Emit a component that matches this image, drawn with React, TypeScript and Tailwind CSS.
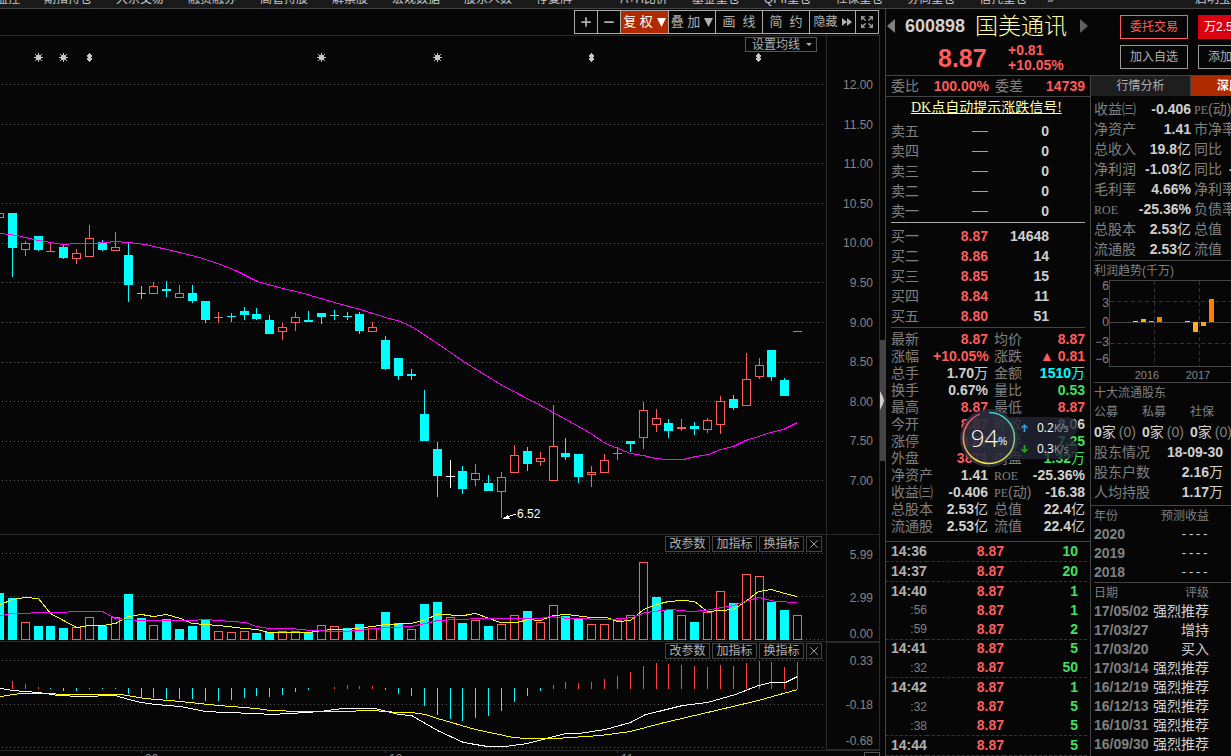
import { Fragment } from "react";
import { Expand, Minus, Plus, X } from "lucide-react";

type Tone = "r" | "c" | "w";
// [tone, high, body top, body bottom, low]
type Candle = [Tone, number, number, number, number];

const RED = "#ff5c5c";
const CYAN = "#00ffff";
const TONES: Record<Tone, string> = { r: RED, c: CYAN, w: "#ffffff" };

// first candle is cut by the left edge
const candles: Candle[] = [
  ["r", 213, 213, 218, 218], ["c", 213, 213, 248, 277], ["r", 241, 243, 250, 256],
  ["c", 236, 236, 250, 251], ["r", 243, 251, 252, 252], ["c", 245, 247, 258, 259],
  ["r", 249, 253, 259, 264], ["r", 225, 238, 257, 257], ["c", 240, 242, 250, 251],
  ["r", 232, 247, 251, 251], ["c", 243, 255, 285, 302], ["c", 286, 293, 294, 299],
  ["r", 282, 286, 294, 294], ["c", 281, 289, 291, 297], ["r", 285, 293, 298, 298],
  ["c", 285, 293, 301, 303], ["c", 301, 301, 320, 323], ["r", 312, 317, 318, 323],
  ["c", 313, 316, 317, 322], ["c", 307, 311, 315, 320], ["c", 308, 314, 319, 320],
  ["c", 315, 320, 334, 334], ["r", 323, 327, 332, 340], ["r", 312, 317, 323, 331],
  ["c", 311, 320, 322, 322], ["c", 313, 313, 317, 324], ["c", 310, 315, 316, 320],
  ["c", 312, 316, 317, 320], ["c", 312, 314, 331, 334], ["r", 322, 327, 332, 332],
  ["c", 336, 340, 369, 370], ["c", 358, 358, 376, 380], ["c", 369, 374, 376, 380],
  ["c", 390, 414, 441, 441], ["c", 442, 449, 476, 497], ["w", 460, 476, 477, 488],
  ["c", 466, 471, 489, 494], ["r", 464, 473, 480, 486], ["c", 475, 483, 491, 491],
  ["r", 472, 477, 492, 518], ["r", 445, 455, 473, 473], ["c", 447, 451, 464, 471],
  ["r", 452, 458, 462, 466], ["r", 405, 446, 481, 481], ["c", 438, 453, 457, 460],
  ["c", 454, 454, 477, 483], ["r", 466, 472, 475, 487], ["r", 454, 460, 473, 473],
  ["r", 447, 453, 454, 460], ["c", 441, 441, 444, 452], ["r", 402, 410, 438, 449],
  ["r", 409, 418, 425, 432], ["c", 419, 423, 431, 438], ["r", 419, 427, 429, 431],
  ["c", 422, 426, 429, 435], ["r", 418, 420, 430, 433], ["r", 396, 401, 425, 434],
  ["c", 395, 399, 408, 410], ["r", 353, 379, 406, 406], ["r", 358, 365, 377, 379],
  ["c", 350, 350, 377, 381], ["c", 378, 380, 396, 396], ["r", 331, 331, 332, 332],
];

const volumes =
  "c593 c598 r622 c626 c626 c628 r627 r617 c626 r617 c594 c618 r625 c619 c629 c626 c620 r631 r632 r631 c633 c632 r631 r631 c632 r625 r626 c628 c624 r628 c612 c623 r629 c604 c602 r617 c623 r620 c626 r624 r615 c611 r622 r605 c616 c619 r624 r624 r620 r615 r562 c597 c610 r615 c622 r612 r591 c603 r574 r576 c602 c610 r615"
    .split(" ")
    .map((s) => ({ tone: s[0] as Tone, top: Number(s.slice(1)) }));

// ends of the MACD sticks, zero line is 688
const macd = [
  681, 684, 687, 689, 691, 691, 689, 689, 689, 694, 698, 698, 699, 699, 699, 701, 701, 700, 698, 696, 697,
  695, 692, 690, 688, 687, 685, 686, 686, 690, 694, 696, 706, 715, 719, 721, 718, 716, 711, 702, 696, 691,
  685, 682, 683, 682, 679, 676, 672, 666, 663, 664, 665, 666, 667, 665, 666, 663, 661, 662, 667, 662,
];

const ma =
  "0,233 16,235 38,240 63,244 75,243 95,243 115,241 128,242 145,244 192,255 205,259 220,264 235,270 257,281 282,288 300,292 334,302 360,309 385,317 400,321 411,326 437,343 463,361 500,384 540,405 580,427 592,434 605,443 630,453 643,455 655,458 668,459 683,459 695,456 708,454 720,449 733,446 745,440 758,436 770,432 783,429 797,422";
const volFast =
  "0,604 12,599 25,597 38,598 50,613 63,620 76,627 89,625 102,625 115,623 128,616 141,614 153,616 166,614 180,618 192,623 218,625 244,628 256,629 269,632 308,632 330,629 347,629 372,626 385,624 411,623 425,619 437,614 463,615 475,613 500,622 517,622 527,619 540,620 553,615 567,614 590,617 606,617 617,621 630,620 643,609 656,604 668,601 682,600 694,601 707,611 733,609 745,601 758,591 771,589 784,593 797,596";
const volSlow =
  "0,615 12,613 50,612 85,611 102,611 115,618 140,620 190,620 205,619 218,620 245,622 256,626 269,628 290,628 310,630 340,631 360,630 372,628 411,626 425,623 437,620 480,618 540,618 550,616 568,618 610,619 632,617 645,612 670,609 690,611 705,610 733,605 748,600 758,597 775,601 797,602";
const dif =
  "0,688 12,690 38,692 58,695 80,696 115,695 128,699 141,702 155,704 180,706 205,711 225,712 256,713 270,714 290,713 320,711 342,708 375,708 398,714 411,715 437,730 463,742 487,746 505,746 527,743 565,733 578,733 605,729 630,722 645,714 658,711 682,705 707,702 735,694 758,685 771,682 785,682 797,676";
const dea =
  "0,696 20,693 50,693 60,694 120,694 145,698 180,701 218,705 256,708 270,710 300,711 340,711 372,710 398,712 411,712 425,714 437,718 475,729 513,737 525,738 555,738 600,735 630,731 660,723 758,700 797,689";

const navItems = [
  "监控", "期指持仓", "大宗交易", "融资融券", "高管持股", "解禁股", "宏观数据", "股东人数", "停复牌",
  "A+H比价", "基金重仓", "QFII重仓", "社保重仓", "券商重仓", "信托重仓",
];

const priceTicks = ["12.00", "11.50", "11.00", "10.50", "10.00", "9.50", "9.00", "8.50", "8.00", "7.50", "7.00"];

const sells = ["卖五", "卖四", "卖三", "卖二", "卖一"];
const buys = [
  ["买一", "8.87", "14648"],
  ["买二", "8.86", "14"],
  ["买三", "8.85", "15"],
  ["买四", "8.84", "11"],
  ["买五", "8.80", "51"],
];

const R = "text-[#ff5c5c]";
const W = "text-[#d0d0d0]";
const G = "text-[#40e060]";
const C = "text-[#00ffff]";

const stats = [
  ["最新", "8.87", R, "均价", "8.87", R],
  ["涨幅", "+10.05%", R, "涨跌", "▲ 0.81", R],
  ["总手", "1.70万", W, "金额", "1510万", C],
  ["换手", "0.67%", W, "量比", "0.53", G],
  ["最高", "8.87", R, "最低", "8.87", R],
  ["今开", "8.87", R, "昨收", "8.06", W],
  ["涨停", "8.87", R, "跌停", "7.25", G],
  ["外盘", "3871", R, "内盘", "1.32万", G],
  ["净资产", "1.41", W, "ROE", "-25.36%", W],
  ["收益㈢", "-0.406", W, "PE(动)", "-16.38", W],
  ["总股本", "2.53亿", W, "总值", "22.4亿", W],
  ["流通股", "2.53亿", W, "流值", "22.4亿", W],
];

// [time, volume, last row of its minute]
const trades: [string, string, boolean][] = [
  ["14:36", "10", true], ["14:37", "20", true], ["14:40", "1", false], [":56", "1", false],
  [":59", "2", true], ["14:41", "5", false], [":32", "50", true], ["14:42", "1", false],
  [":32", "5", false], [":38", "5", true], ["14:44", "5", true],
];

const finance = [
  ["收益㈢", "-0.406", "PE(动)", ""],
  ["净资产", "1.41", "市净率", ""],
  ["总收入", "19.8亿", "同比", ""],
  ["净利润", "-1.03亿", "同比", "-"],
  ["毛利率", "4.66%", "净利率", ""],
  ["ROE", "-25.36%", "负债率", ""],
  ["总股本", "2.53亿", "总值", ""],
  ["流通股", "2.53亿", "流值", ""],
];

const profitBars = [
  [1133, 321, 1, "#ffc266"], [1141, 319, 3, "#ffb020"], [1149, 321, 1, "#ffa31a"], [1157, 317, 5, "#ff8000"],
  [1185, 321, 1, "#ffc266"], [1193, 322, 10, "#ffb020"], [1201, 322, 4, "#ffa31a"], [1209, 299, 23, "#ff8000"],
] as const;

const ratings = [
  ["17/05/02", "强烈推荐"], ["17/03/27", "增持"], ["17/03/20", "买入"], ["17/03/14", "强烈推荐"],
  ["16/12/19", "强烈推荐"], ["16/12/13", "强烈推荐"], ["16/10/31", "强烈推荐"], ["16/09/30", "强烈推荐"],
];

const colX = (i: number) => Math.floor(12.3 + 12.875 * i);

// digits are bold, the unit behind them is not
function Num({ children }: { children: string }) {
  return (
    <span className="font-bold">
      {children.split(/([万亿家▲])/).map((part, i) =>
        /[万亿家▲]/.test(part) ? (
          <span key={i} className="font-normal">{part}</span>
        ) : (
          <Fragment key={i}>{part}</Fragment>
        )
      )}
    </span>
  );
}

// latin parts of a label are set in a small serif
function Label({ children }: { children: string }) {
  return (
    <>
      {children.split(/(ROE|PE)/).map((part, i) =>
        /ROE|PE/.test(part) ? (
          <span key={i} className="text-xs font-['Liberation_Serif',serif]">{part}</span>
        ) : (
          <Fragment key={i}>{part}</Fragment>
        )
      )}
    </>
  );
}

function Dots({ ys }: { ys: number[] }) {
  return (
    <>
      {ys.map((y) => (
        <line key={y} x1="2" x2="826" y1={y + 0.5} y2={y + 0.5} stroke="#585858" strokeDasharray="1 3" />
      ))}
    </>
  );
}

function Trend({ points, color }: { points: string; color: string }) {
  return <polyline points={points} fill="none" stroke={color} strokeWidth="1" transform="translate(0.5 0.5)" />;
}

function Plot({ top, height, children }: { top: number; height: number; children: React.ReactNode }) {
  return (
    <svg
      viewBox={`0 ${top} 826 ${height}`}
      preserveAspectRatio="none"
      shapeRendering="crispEdges"
      className="block w-full h-full"
    >
      {children}
    </svg>
  );
}

function Star({ x }: { x: number }) {
  return (
    <g stroke="#c8c8c8" fill="#c8c8c8">
      <rect x={x - 2} y="55" width="5" height="5" stroke="none" />
      <path d={`M${x + 0.5} 53v9M${x - 4} 57.5h9`} />
      <path d={`M${x - 3} 54h1v1h-1zM${x + 3} 54h1v1h-1zM${x - 3} 60h1v1h-1zM${x + 3} 60h1v1h-1z`} stroke="none" />
    </g>
  );
}

function Capsule({ x }: { x: number }) {
  return (
    <path
      fill="#c8c8c8"
      d={`M${x} 53h1v1h1v1h1v2h-1v1h1v2h-1v1h-1v1h-1v-1h-1v-1h-1v-2h1v-1h-1v-2h1v-1h1z`}
    />
  );
}

function PriceChart() {
  return (
    <Plot top={36} height={498}>
      <Dots ys={[84, 124, 163, 203, 243, 282, 322, 362, 401, 441, 480]} />
      {[38, 63, 321, 437].map((x) => <Star key={x} x={x} />)}
      {[89, 591, 758].map((x) => <Capsule key={x} x={x} />)}
      {candles.map(([tone, high, top, bottom, low], i) => {
        const x = colX(i - 1);
        const color = TONES[tone];
        const hollow = tone === "r" && bottom - top > 2;
        return (
          <g key={i} fill={color}>
            <rect x={x} y={high} width="1" height={top - high} />
            <rect x={x} y={bottom} width="1" height={low - bottom} />
            {hollow ? (
              <rect x={x - 3.5} y={top + 0.5} width="8" height={bottom - top - 1} fill="none" stroke={color} />
            ) : (
              <rect x={x - 4} y={top} width="9" height={bottom - top} />
            )}
          </g>
        );
      })}
      <Trend points={ma} color="#ff00ff" />
      <path d="M504 518L516 514" stroke="#fff" />
      <path d="M503 518.500L508 515v2l2 1v1z" fill="#fff" />
      <text x="517" y="518" fill="#fff" fontSize="12">6.52</text>
    </Plot>
  );
}

function VolumeChart() {
  return (
    <Plot top={535} height={106}>
      <Dots ys={[553, 596, 639]} />
      {volumes.map(({ tone, top }, i) => {
        const x = colX(i - 1);
        return tone === "r" ? (
          <rect key={i} x={x - 3.5} y={top + 0.5} width="8" height={639 - top} fill="#060606" stroke={RED} />
        ) : (
          <rect key={i} x={x - 4} y={top} width="9" height={640 - top} fill={CYAN} />
        );
      })}
      <Trend points={volFast} color="#ffff00" />
      <Trend points={volSlow} color="#ff00ff" />
    </Plot>
  );
}

function MacdChart() {
  return (
    <Plot top={642} height={108}>
      <Dots ys={[660, 704, 747]} />
      {macd.map((end, i) => (
        <rect
          key={i}
          x={colX(i)}
          y={Math.min(end, 688)}
          width="1"
          height={end < 688 ? 689 - end : end - 688}
          fill={end < 688 ? "#ff4040" : CYAN}
        />
      ))}
      <Trend points={dif} color="#ffffff" />
      <Trend points={dea} color="#ffff00" />
    </Plot>
  );
}

function IndicatorButtons() {
  return (
    <div className="absolute top-px right-1 flex gap-[2px] text-xs leading-[14px] text-[#b0b0b0]">
      {["改参数", "加指标", "换指标"].map((label) => (
        <button key={label} className="w-[45px] h-4 border border-[#444] bg-[#060606] whitespace-nowrap">
          {label}
        </button>
      ))}
      <button aria-label="关闭" className="w-4 h-4 border border-[#444] bg-[#060606] flex items-center justify-center">
        <X className="w-[14px] h-[14px] shrink-0" strokeWidth={1.5} />
      </button>
    </div>
  );
}

function ToolButton({ children, className = "w-[47px]" }: { children: React.ReactNode; className?: string }) {
  return (
    <button
      className={`h-[22px] flex items-center justify-center whitespace-nowrap border-r border-[#aaa] last:border-r-0 ${className}`}
    >
      {children}
    </button>
  );
}

function ChartArea() {
  return (
    <section className="flex-1 min-w-0 flex flex-col">
      <div className="h-[27px] border-b border-[#2a2a2a] flex justify-end items-center pr-px">
        <div className="flex border border-[#aaa] text-sm leading-5 text-[#b0b0b0]">
          <ToolButton className="w-[23px]"><Plus className="w-[14px] h-[14px]" strokeWidth={3} /></ToolButton>
          <ToolButton className="w-[23px]"><Minus className="w-[14px] h-[14px]" strokeWidth={3} /></ToolButton>
          <ToolButton className="w-[48px] bg-[#b02a00] text-white">
            <span className="text-[13px]">复&nbsp;权</span>
            <svg viewBox="0 0 9 9" className="w-[9px] h-[9px] ml-1" fill="currentColor"><path d="M0 0h9L4.500 9z" /></svg>
          </ToolButton>
          <ToolButton>
            <span className="text-[13px]">叠&nbsp;加</span>
            <svg viewBox="0 0 9 9" className="w-[9px] h-[9px] ml-1" fill="currentColor"><path d="M0 0h9L4.500 9z" /></svg>
          </ToolButton>
          <ToolButton><span className="text-[13px]">画&nbsp;&nbsp;线</span></ToolButton>
          <ToolButton><span className="text-[13px]">简&nbsp;&nbsp;约</span></ToolButton>
          <ToolButton className="w-[46px] text-xs">
            隐藏
            <svg viewBox="0 0 10 8" className="w-[10px] h-2 ml-1" fill="currentColor"><path d="M0 0l5 4-5 4zM5 0l5 4-5 4z" /></svg>
          </ToolButton>
          <ToolButton className="w-[22px]"><Expand className="w-[14px] h-[14px]" strokeWidth={2} /></ToolButton>
        </div>
      </div>

      <div className="flex-1 min-h-0 flex border-b border-[#2a2a2a]">
        <div className="relative flex-1 min-w-0">
          <PriceChart />
          <button className="absolute top-px right-[9px] h-[15px] w-[72px] border border-[#555] bg-[#060606] flex items-center justify-end gap-[6px] pr-1 text-xs leading-3 text-[#b0b0b0] whitespace-nowrap">
            设置均线
            <svg viewBox="0 0 6 3" className="w-[6px] h-[3px]" fill="currentColor"><path d="M0 0h6L3 3z" /></svg>
          </button>
        </div>
        <div className="w-[54px] border-x border-[#2a2a2a] pt-[41px] pb-[45px] pr-[6px] flex flex-col justify-between text-right text-xs leading-4 text-[#858585]">
          {priceTicks.map((t) => <span key={t}>{t}</span>)}
        </div>
      </div>

      <div className="h-[107px] flex border-b border-[#2a2a2a]">
        <div className="relative flex-1 min-w-0">
          <VolumeChart />
          <IndicatorButtons />
        </div>
        <div className="w-[54px] border-x border-[#2a2a2a] pt-3 pr-[6px] flex flex-col text-right text-xs leading-4 text-[#858585]">
          <span>5.99</span>
          <span className="mt-[27px]">2.99</span>
          <span className="mt-5">0.00</span>
        </div>
      </div>

      <div className="h-[109px] flex border-b border-[#2a2a2a]">
        <div className="relative flex-1 min-w-0">
          <MacdChart />
          <IndicatorButtons />
        </div>
        <div className="w-[54px] border border-[#2a2a2a] pt-[10px] pr-[6px] flex flex-col text-right text-xs leading-4 text-[#858585]">
          <span>0.33</span>
          <span className="mt-7">-0.18</span>
          <span className="mt-5">-0.68</span>
        </div>
      </div>

      <div className="h-[5px] overflow-hidden flex">
        <div className="flex-1 min-w-0">
          <svg viewBox="0 751 826 5" preserveAspectRatio="none" className="block w-full h-full">
            {[[141, "09"], [385, "10"], [617, "11"]].map(([x, label]) => (
              <g key={label}>
                <rect x={x} y="751" width="1" height="2" fill="#3a3a3a" />
                <text x={Number(x) + 4} y="763" fontSize="12" fill="#858585">{label}</text>
              </g>
            ))}
          </svg>
        </div>
        <div className="w-[54px] flex justify-end pt-px">
          <div className="w-4 h-4 border border-[#555]" />
        </div>
      </div>
    </section>
  );
}

function StockHeader() {
  return (
    <div className="h-[67px] border-b border-[#444] flex">
      <div className="w-[205px] shrink-0 pt-1">
        <div className="h-[26px] flex items-center">
          <button aria-label="上一只">
            <svg viewBox="0 0 8 14" className="w-2 h-[14px] ml-px" fill="#808080"><path d="M8 0v14L0 7z" /></svg>
          </button>
          <span className="ml-[10px] text-lg leading-6 font-bold text-[#d0d0d0]">600898</span>
          <h1 className="ml-[10px] text-[23px] leading-6 font-light text-[#ffffaa] w-[95px] whitespace-nowrap">国美通讯</h1>
          <button aria-label="下一只" className="ml-[10px]">
            <svg viewBox="0 0 8 14" className="w-2 h-[14px]" fill="#606060"><path d="M0 0v14l8-7z" /></svg>
          </button>
        </div>
        <div className="flex items-center pl-[52px] pt-1 text-[#ff5c5c] font-bold">
          <span className="text-[25px] leading-[30px] w-[70px]">8.87</span>
          <div className="text-sm leading-[15px]">
            <div>+0.81</div>
            <div>+10.05%</div>
          </div>
        </div>
      </div>
      <div className="pl-[29px] pt-[6px] grid grid-cols-[68px_68px] gap-x-[10px] gap-y-[6px] auto-rows-[24px] text-xs">
        <button className="border border-[#ff5c5c] text-[#ff5c5c] whitespace-nowrap">委托交易</button>
        <button className="bg-[#d90012] text-white text-left pl-[6px] whitespace-nowrap">万2.5开户</button>
        <button className="border border-[#999] text-[#b0b0b0] whitespace-nowrap">加入自选</button>
        <button className="border border-[#999] text-[#b0b0b0] text-left pl-[9px] whitespace-nowrap">添加预警</button>
      </div>
    </div>
  );
}

function QuoteColumn() {
  return (
    <div className="w-[205px] shrink-0 border-r border-[#444] flex flex-col text-sm leading-[17px] text-[#808080]">
      <div className="h-[21px] border-b border-[#444] flex items-center pl-[5px] pr-[5px] whitespace-nowrap">
        <span className="w-[28px]">委比</span>
        <span className="w-[70px] text-right text-[#ff5c5c]"><Num>100.00%</Num></span>
        <span className="ml-[6px]">委差</span>
        <span className="flex-1 text-right text-[#ff5c5c]"><Num>14739</Num></span>
      </div>
      <div className="h-5 flex items-center pl-[25px] whitespace-nowrap">
        <a href="#dk" className="text-[#ffffaa] underline font-['Liberation_Serif','Noto_Sans_CJK_SC',serif]">DK点自动提示涨跌信号!</a>
      </div>

      <table className="mt-1 ml-[5px] w-[158px] table-fixed">
        <tbody>
          {sells.map((label) => (
            <tr key={label} className="h-5">
              <td className="w-10">{label}</td>
              <td className="w-[57px] pl-[41px]"><div className="w-4 h-px bg-[#40e060]" /></td>
              <td className="text-right text-[#d0d0d0]"><Num>0</Num></td>
            </tr>
          ))}
        </tbody>
      </table>
      <div className="mx-[5px] mt-px h-px bg-[#aaa] shrink-0" />
      <table className="mt-[3px] ml-[5px] w-[158px] table-fixed">
        <tbody>
          {buys.map(([label, price, vol]) => (
            <tr key={label} className="h-5">
              <td className="w-10">{label}</td>
              <td className="w-[57px] text-right text-[#ff5c5c]"><Num>{price}</Num></td>
              <td className="text-right text-[#d0d0d0]"><Num>{vol}</Num></td>
            </tr>
          ))}
        </tbody>
      </table>
      <div className="mx-[5px] mt-px h-px bg-[#444] shrink-0" />

      <table className="mt-[3px] ml-[5px] w-[194px] table-fixed">
        <tbody>
          {stats.map(([l1, v1, c1, l2, v2, c2]) => (
            <tr key={l1} className="h-[17px] whitespace-nowrap">
              <td className="w-[42px]"><Label>{l1}</Label></td>
              <td className={`w-[55px] text-right ${c1}`}><Num>{v1}</Num></td>
              <td className="w-[43px] pl-[6px]"><Label>{l2}</Label></td>
              <td className={`text-right ${c2}`}><Num>{v2}</Num></td>
            </tr>
          ))}
        </tbody>
      </table>

      <div className="mt-[6px] flex-1 min-h-0 border-t border-[#444] pr-[3px]">
        <table className="w-full h-full table-fixed border-collapse">
          <tbody>
            {trades.map(([time, vol, last], i) => (
              <tr key={i} className={last ? "border-b border-dashed border-[#333]" : ""}>
                <td className="w-[41px] pl-[5px] text-[#b0b0b0]">
                  {time[0] === ":" ? (
                    <div className="text-right text-xs text-[#808080]">{time}</div>
                  ) : (
                    <Num>{time}</Num>
                  )}
                </td>
                <td className="text-right w-[77px] text-[#ff5c5c]"><Num>8.87</Num></td>
                <td className="text-right pr-[9px] text-[#40e060]"><Num>{vol}</Num></td>
              </tr>
            ))}
          </tbody>
        </table>
      </div>
    </div>
  );
}

function ProfitChart() {
  return (
    <svg viewBox="1091 280 140 102" className="block w-[140px] h-[102px] shrink-0" fontSize="12" fill="#858585">
      <g shapeRendering="crispEdges" fill="none" stroke="#444">
        <path d="M1231 280.500H1109.500V366.500H1231M1109.500 322.500H1231" />
        <path d="M1110 301.500H1231M1110 343.500H1231M1154.500 281V366M1199.500 281V366" stroke="#333" strokeDasharray="4 3" />
      </g>
      {profitBars.map(([x, y, h, color]) => (
        <rect key={x} x={x} y={y} width="5" height={h} fill={color} />
      ))}
      <g textAnchor="end">
        <text x="1109" y="290">6</text>
        <text x="1109" y="307">3</text>
        <text x="1109" y="326">0</text>
        <text x="1109" y="346">−3</text>
        <text x="1109" y="363">−6</text>
      </g>
      <g textAnchor="middle" fontSize="11">
        <text x="1147" y="379">2016</text>
        <text x="1198" y="379">2017</text>
      </g>
    </svg>
  );
}

function AnalysisColumn() {
  return (
    <div className="flex-1 min-w-0 overflow-hidden flex flex-col text-sm leading-[17px] text-[#808080]">
      <div className="h-5 shrink-0 flex text-xs">
        <button className="w-[100px] shrink-0 bg-[#1e1e1e] border-r border-[#444] text-[#b0b0b0]">行情分析</button>
        <button className="w-[100px] shrink-0 bg-[#b02a00] text-white font-bold">深度分析</button>
      </div>
      <table className="mt-[3px] ml-[3px] w-[160px] table-fixed shrink-0">
        <tbody>
          {finance.map(([label, value, label2, value2], i) => (
            <tr key={i} className="h-5 whitespace-nowrap">
              <td className="w-[42px]"><Label>{label}</Label></td>
              <td className="w-[55px] text-right text-[#d0d0d0]"><Num>{value}</Num></td>
              <td className="pl-[3px]">
                <Label>{label2}</Label>
                {value2 && <span className="ml-[7px] font-bold text-[#d0d0d0]">{value2}</span>}
              </td>
            </tr>
          ))}
        </tbody>
      </table>
      <div className="mt-px ml-[3px] h-5 shrink-0 border-t border-[#444] text-xs leading-5">利润趋势(千万)</div>
      <ProfitChart />
      <div className="ml-[3px] border-t border-[#444] whitespace-nowrap shrink-0">
        <div className="h-[19px] text-xs leading-[21px]">十大流通股东</div>
        <div className="grid grid-cols-[48px_48px_48px] text-xs leading-5">
          <span>公募</span>
          <span>私募</span>
          <span>社保</span>
        </div>
        <div className="grid grid-cols-[48px_48px_48px] leading-5">
          {[0, 1, 2].map((i) => (
            <span key={i} className="flex">
              <span className="text-[#d0d0d0]"><Num>0家</Num></span>
              <span className="ml-[3px]">(0)</span>
            </span>
          ))}
        </div>
        {[["股东情况", "18-09-30"], ["股东户数", "2.16万"], ["人均持股", "1.17万"]].map(([label, value]) => (
          <div key={label} className="w-[129px] flex justify-between leading-5">
            <span>{label}</span>
            <span className="text-[#d0d0d0]"><Num>{value}</Num></span>
          </div>
        ))}
      </div>
      <div className="mt-[3px] border-t border-[#444] shrink-0">
        <table className="ml-[3px] w-[115px] whitespace-nowrap">
          <thead>
            <tr className="h-[19px] text-xs">
              <th className="font-normal text-left">年份</th>
              <th className="font-normal text-right">预测收益</th>
            </tr>
          </thead>
          <tbody>
            {["2020", "2019", "2018"].map((year) => (
              <tr key={year} className="h-[19px]">
                <td><Num>{year}</Num></td>
                <td className="text-right text-[#d0d0d0] font-['Liberation_Mono',monospace] text-xs">----</td>
              </tr>
            ))}
          </tbody>
        </table>
      </div>
      <div className="ml-[3px] border-t border-[#444] shrink-0">
        <table className="w-[115px] whitespace-nowrap">
          <thead>
            <tr className="h-[19px] text-xs">
              <th className="font-normal text-left">日期</th>
              <th className="font-normal text-right">评级</th>
            </tr>
          </thead>
          <tbody>
            {ratings.map(([date, rating]) => (
              <tr key={date} className="h-[19px]">
                <td className="w-[58px] font-bold">{date}</td>
                <td className="text-right text-[#d0d0d0]">{rating}</td>
              </tr>
            ))}
          </tbody>
        </table>
      </div>
    </div>
  );
}

function SpeedWidget() {
  return (
    <div className="absolute top-[400px] left-[74px] flex items-center">
      <div className="relative z-10 w-[58px] h-[58px] rounded-full bg-[#2c2f3e]/90 flex items-center justify-center text-white">
        <svg viewBox="0 0 58 58" className="absolute inset-0" fill="none" strokeWidth="1.500">
          <defs>
            <linearGradient id="ringRight" x1="0" y1="0" x2="0" y2="1">
              <stop offset="0" stopColor="#2fd0c8" />
              <stop offset="0.6" stopColor="#8fd070" />
              <stop offset="1" stopColor="#f0e040" />
            </linearGradient>
            <linearGradient id="ringLeft" x1="0" y1="0" x2="0" y2="1">
              <stop offset="0" stopColor="#f04080" />
              <stop offset="0.5" stopColor="#ff9040" />
              <stop offset="1" stopColor="#f0e040" />
            </linearGradient>
          </defs>
          <path d="M29 3.500a25.500 25.500 0 0 1 0 51" stroke="url(#ringRight)" />
          <path d="M29 54.500A25.500 25.500 0 0 1 20 5.100" stroke="url(#ringLeft)" />
        </svg>
        <span className="font-['Open_Sans',sans-serif] font-light text-2xl leading-7">94</span>
        <span className="text-[10px] leading-3 mt-2">%</span>
      </div>
      <div className="-ml-2 w-[68px] text-xs leading-5 text-white font-['Open_Sans',sans-serif]">
        {[["0.2", "#30a0e8", "M4 0l4 4-1 1-2-2v6H3V3L1 5 0 4z"], ["0.3", "#20b020", "M4 9l4-4-1-1-2 2V0H3v6L1 4 0 5z"]].map(([speed, color, d]) => (
          <div key={speed} className="h-[21px] rounded-r-full bg-[#222533]/80 flex items-center pl-[11px]">
            <svg viewBox="0 0 8 9" className="w-[7px] h-2" fill={color}><path d={d} /></svg>
            <span className="ml-[9px]">{speed}</span>
            <span className="text-[10px] text-[#999]">K/s</span>
          </div>
        ))}
      </div>
    </div>
  );
}

export default function App() {
  return (
    <div className="h-screen overflow-hidden flex flex-col bg-[#060606] font-['Liberation_Sans','Noto_Sans_CJK_SC',sans-serif]">
      <nav className="h-[9px] shrink-0 overflow-hidden flex items-end justify-between bg-[#1a1a1a] border-b border-[#444] text-xs leading-[14px] pb-[2px] text-[#c8c8c8] whitespace-nowrap">
        <div className="flex -ml-4">
          {navItems.map((item) => (
            <a key={item} href="#nav" className={item === "A+H比价" ? "pl-9 pr-3" : "px-3"}>{item}</a>
          ))}
          <a href="#more" className="pl-2">»</a>
        </div>
        <a href="#account" className="w-9">启明宝</a>
      </nav>

      <main className="flex-1 min-h-0 flex">
        <ChartArea />
        <div className="w-[5px] shrink-0 pt-[331px]">
          <button aria-label="收起" className="w-[5px] h-[121px] bg-[#444] flex items-center">
            <svg viewBox="0 0 4 19" className="w-1 h-[19px]" fill="#d0d0d0"><path d="M0 0l3 6 1 3.500L3 13l-3 6z" /></svg>
          </button>
        </div>
        <aside className="relative w-[346px] shrink-0 border-l border-[#444] overflow-hidden flex flex-col">
          <StockHeader />
          <div className="flex-1 min-h-0 flex">
            <QuoteColumn />
            <AnalysisColumn />
          </div>
          <SpeedWidget />
        </aside>
      </main>
    </div>
  );
}
